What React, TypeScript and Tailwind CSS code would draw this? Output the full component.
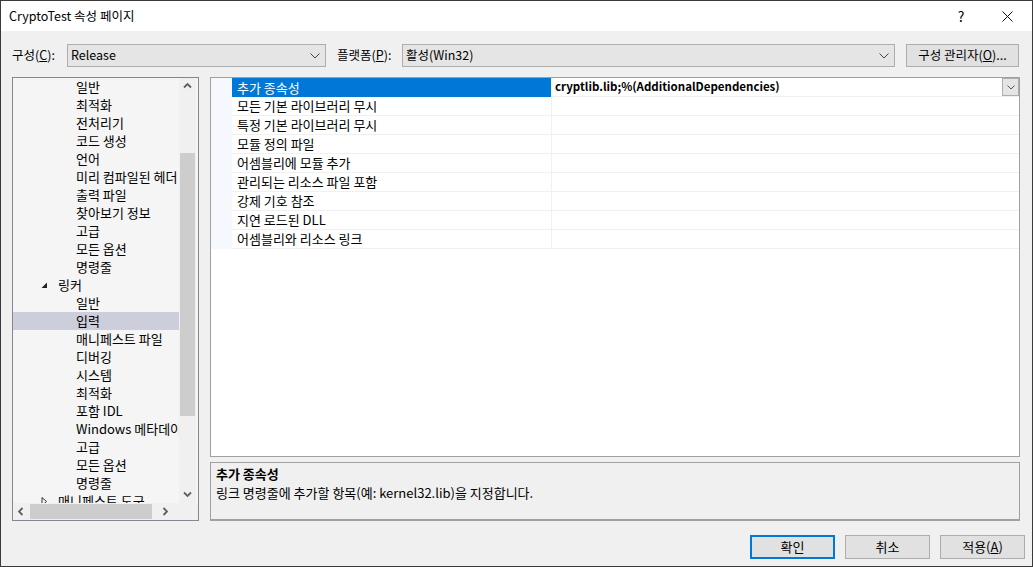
const treeItems: { label: string; level: 0 | 1; arrow?: 'open' | 'closed'; selected?: boolean }[] = [
  { label: '일반', level: 1 },
  { label: '최적화', level: 1 },
  { label: '전처리기', level: 1 },
  { label: '코드 생성', level: 1 },
  { label: '언어', level: 1 },
  { label: '미리 컴파일된 헤더', level: 1 },
  { label: '출력 파일', level: 1 },
  { label: '찾아보기 정보', level: 1 },
  { label: '고급', level: 1 },
  { label: '모든 옵션', level: 1 },
  { label: '명령줄', level: 1 },
  { label: '링커', level: 0, arrow: 'open' },
  { label: '일반', level: 1 },
  { label: '입력', level: 1, selected: true },
  { label: '매니페스트 파일', level: 1 },
  { label: '디버깅', level: 1 },
  { label: '시스템', level: 1 },
  { label: '최적화', level: 1 },
  { label: '포함 IDL', level: 1 },
  { label: 'Windows 메타데이터', level: 1 },
  { label: '고급', level: 1 },
  { label: '모든 옵션', level: 1 },
  { label: '명령줄', level: 1 },
  { label: '매니페스트 도구', level: 0, arrow: 'closed' },
]

const props = [
  '추가 종속성',
  '모든 기본 라이브러리 무시',
  '특정 기본 라이브러리 무시',
  '모듈 정의 파일',
  '어셈블리에 모듈 추가',
  '관리되는 리소스 파일 포함',
  '강제 기호 참조',
  '지연 로드된 DLL',
  '어셈블리와 리소스 링크',
]

function Chevron({ dir }: { dir: 'up' | 'down' | 'left' | 'right' }) {
  const d = {
    up: 'M1 5.5 L4.5 2 L8 5.5',
    down: 'M1 2.5 L4.5 6 L8 2.5',
    left: 'M5.5 1 L2 4.5 L5.5 8',
    right: 'M2.5 1 L6 4.5 L2.5 8',
  }[dir]
  return (
    <svg width="9" height="9" viewBox="0 0 9 9">
      <path d={d} fill="none" stroke="#606060" strokeWidth="1.8" />
    </svg>
  )
}

function ComboArrow() {
  return (
    <svg width="10" height="6" viewBox="0 0 10 6">
      <path d="M0.5 0.5 L5 5 L9.5 0.5" fill="none" stroke="#444" strokeWidth="1" />
    </svg>
  )
}

function Combo({ value, width }: { value: string; width: string }) {
  return (
    <div className={`${width} h-[23px] bg-[#e5e5e5] border border-[#adadad] flex items-center justify-between pl-[3px] pr-[5px]`}>
      <span>{value}</span>
      <ComboArrow />
    </div>
  )
}

function Button({ children, primary }: { children: React.ReactNode; primary?: boolean }) {
  return (
    <div
      className={`w-[85px] h-[24px] flex items-center justify-center bg-[#e1e1e1] ${
        primary ? 'border-2 border-[#0078d7]' : 'border border-[#adadad]'
      }`}
    >
      {children}
    </div>
  )
}

export default function App() {
  return (
    <div
      className="w-[1033px] h-[567px] border border-[#3a3a3a] flex flex-col text-[13px] text-black overflow-hidden"
      style={{ fontFamily: '"Noto Sans CJK KR", "Noto Sans", sans-serif' }}
    >
      {/* title bar */}
      <div className="h-[30px] bg-white flex items-center shrink-0">
        <span className="pl-[8px] flex-1 leading-none text-[12.5px]">CryptoTest 속성 페이지</span>
        <span className="w-[46px] text-center text-[14px] leading-none">?</span>
        <div className="w-[46px] h-[30px] flex items-center justify-center mr-[2px]">
          <svg width="11" height="11" viewBox="0 0 11 11">
            <path d="M0.5 0.5 L10.5 10.5 M10.5 0.5 L0.5 10.5" stroke="#111" strokeWidth="1" />
          </svg>
        </div>
      </div>

      <div className="flex-1 bg-[#f0f0f0] flex flex-col pl-[11px] pr-[12px]">
        {/* config row */}
        <div className="mt-[13px] flex items-center h-[23px] text-[12.5px]">
          <span className="w-[55px]">
            구성(<span className="underline">C</span>):
          </span>
          <Combo value="Release" width="w-[259px]" />
          <span className="ml-[11px] w-[65px]">
            플랫폼(<span className="underline">P</span>):
          </span>
          <Combo value="활성(Win32)" width="w-[493px]" />
          <div className="ml-[11px] w-[113px] h-[23px] bg-[#e1e1e1] border border-[#adadad] flex items-center justify-center">
            구성 관리자(<span className="underline">O</span>)...
          </div>
        </div>

        {/* main panels */}
        <div className="mt-[10px] flex h-[444px]">
          {/* tree */}
          <div className="w-[187px] border border-[#828790] bg-[#f5f5f5] flex flex-col">
            <div className="flex flex-1 min-h-0">
              <div className="flex-1 overflow-hidden">
                {treeItems.map((it, i) => (
                  <div
                    key={i}
                    className={`h-[18px] flex items-center whitespace-nowrap ${it.selected ? 'bg-[#cccedb]' : ''} ${
                      it.level === 1 ? 'pl-[63px]' : 'pl-[28px]'
                    }`}
                  >
                    {it.arrow === 'open' && (
                      <svg width="7" height="7" viewBox="0 0 7 7" className="mr-[10px]">
                        <path d="M6 0.5 L6 6 L0.5 6 Z" fill="#222" />
                      </svg>
                    )}
                    {it.arrow === 'closed' && (
                      <svg width="7" height="9" viewBox="0 0 7 9" className="mr-[10px]">
                        <path d="M1 0.5 L5.5 4.5 L1 8.5 Z" fill="none" stroke="#333" strokeWidth="1" />
                      </svg>
                    )}
                    <span>{it.label}</span>
                  </div>
                ))}
              </div>
              <div className="w-[17px] mr-[2px] bg-[#f0f0f0] flex flex-col items-center">
                <div className="h-[17px] flex items-center justify-center">
                  <Chevron dir="up" />
                </div>
                <div className="mt-[58px] w-[15px] h-[263px] bg-[#cdcdcd]" />
                <div className="flex-1" />
                <div className="h-[17px] flex items-center justify-center">
                  <Chevron dir="down" />
                </div>
              </div>
            </div>
            <div className="h-[17px] flex bg-[#f0f0f0]">
              <div className="flex-1 flex items-center">
                <div className="w-[17px] flex justify-center">
                  <Chevron dir="left" />
                </div>
                <div className="w-[122px] h-[15px] bg-[#cdcdcd]" />
                <div className="flex-1 flex justify-center">
                  <Chevron dir="right" />
                </div>
              </div>
              <div className="w-[19px]" />
            </div>
          </div>

          {/* right column */}
          <div className="ml-[11px] flex-1 flex flex-col">
            <div className="h-[380px] border border-[#a0a0a0] bg-white flex flex-col">
              {props.map((p, i) => (
                <div key={i} className="h-[19px] flex">
                  <div className="w-[21px] bg-[#f5f8fc]" />
                  <div
                    className={`w-[319px] flex items-center pl-[5px] whitespace-nowrap ${
                      i === 0 ? 'bg-[#0078d7] text-white' : 'border-b border-[#f0f0f0]'
                    }`}
                  >
                    {p}
                  </div>
                  <div className="flex-1 border-l border-b border-[#f0f0f0] flex items-center pl-[3px]">
                    {i === 0 && (
                      <>
                        <span className="flex-1 font-bold text-[11.5px]">cryptlib.lib;%(AdditionalDependencies)</span>
                        <div className="w-[17px] h-[18px] bg-[#e5e5e5] border border-[#adadad] flex items-center justify-center">
                          <svg width="8" height="5" viewBox="0 0 8 5">
                            <path d="M0.5 0.5 L4 4 L7.5 0.5" fill="none" stroke="#555" strokeWidth="1" />
                          </svg>
                        </div>
                      </>
                    )}
                  </div>
                </div>
              ))}
            </div>
            <div className="mt-[5px] h-[59px] border border-[#a0a0a0] border-b-2 bg-[#f0f0f0] pl-[5px] pt-[1px] flex flex-col">
              <span className="font-bold h-[19px] flex items-center">추가 종속성</span>
              <span className="h-[19px] flex items-center">링크 명령줄에 추가할 항목(예: kernel32.lib)을 지정합니다.</span>
            </div>
          </div>
        </div>

        {/* buttons */}
        <div className="mt-[14px] flex justify-end gap-[10px] mr-[-5px]">
          <Button primary>확인</Button>
          <Button>취소</Button>
          <Button>
            적용(<span className="underline">A</span>)
          </Button>
        </div>
      </div>
    </div>
  )
}
